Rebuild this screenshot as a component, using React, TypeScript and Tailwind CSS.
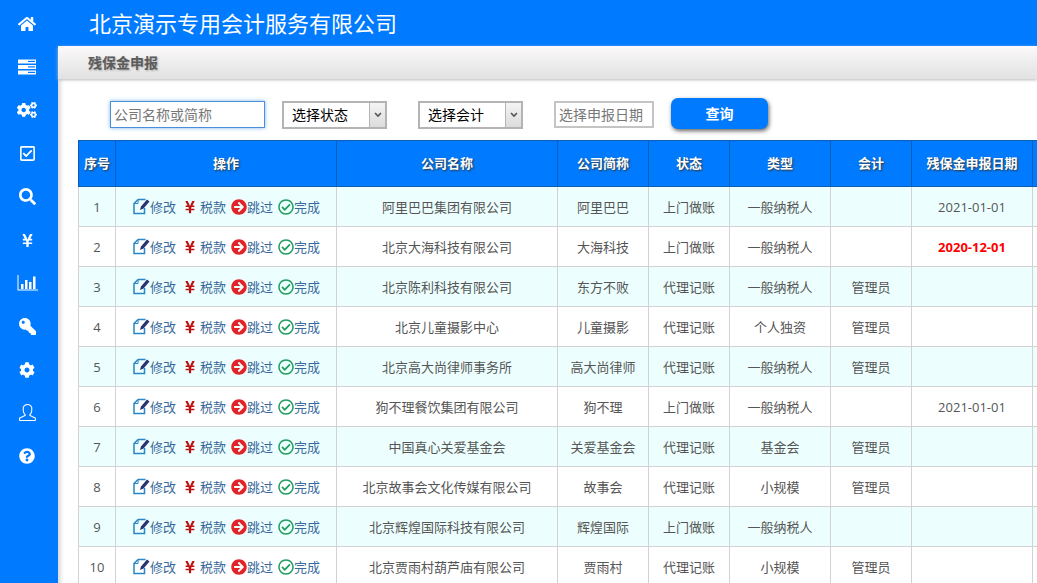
import React from "react";
import { FaHome, FaCogs, FaRegCheckSquare, FaSearch, FaYenSign, FaCog, FaQuestionCircle, FaKey, FaArrowCircleRight, FaRegCheckCircle } from "react-icons/fa";
import { SlUser } from "react-icons/sl";

const font = "font-['Open_Sans','Noto_Sans_CJK_SC',sans-serif]";

const ServerIcon = () => (
  <svg width="20" height="16" viewBox="0 0 20 16" fill="white">
    <rect x="1" y="0.5" width="18" height="4" />
    <rect x="1" y="6" width="18" height="4" />
    <rect x="1" y="11.5" width="18" height="4" />
    <rect x="11" y="1.8" width="7" height="1.2" fill="#007bff" />
    <rect x="11" y="7.3" width="7" height="1.2" fill="#007bff" />
    <rect x="11" y="12.8" width="7" height="1.2" fill="#007bff" />
  </svg>
);

const ChartIcon = () => (
  <svg width="21" height="16" viewBox="0 0 21 16" fill="white">
    <path d="M0.5 0v15.5H21v-1H1.5V0z" />
    <rect x="4" y="9" width="2.5" height="5" />
    <rect x="8" y="5" width="2.5" height="9" />
    <rect x="12" y="7" width="2.5" height="7" />
    <rect x="16" y="1.5" width="2.5" height="12.5" />
  </svg>
);

const EditIcon = () => (
  <svg width="17" height="17" viewBox="0 0 17 17" fill="none">
    <path d="M5 1.5h7.5M5 1.5L1 5.5V15.5H11.5V10" stroke="#2a87c5" strokeWidth="1.5" />
    <path d="M5 1.5V5.5H1" stroke="#2a87c5" strokeWidth="1" />
    <path d="M7 12l1-3.5 6-7 2.5 2-6 7z" fill="#27346f" />
  </svg>
);

const menu = [
  <FaHome size={18} />,
  <ServerIcon />,
  <FaCogs size={20} />,
  <FaRegCheckSquare size={17} />,
  <FaSearch size={17} />,
  <FaYenSign size={15} />,
  <ChartIcon />,
  <FaKey size={17} className="-scale-x-100" />,
  <FaCog size={16} />,
  <SlUser size={17} />,
  <FaQuestionCircle size={16} />,
];

const rows: [string, string, string, string, string, string, string, boolean?][] = [
  ["1", "阿里巴巴集团有限公司", "阿里巴巴", "上门做账", "一般纳税人", "", "2021-01-01"],
  ["2", "北京大海科技有限公司", "大海科技", "上门做账", "一般纳税人", "", "2020-12-01", true],
  ["3", "北京陈利科技有限公司", "东方不败", "代理记账", "一般纳税人", "管理员", ""],
  ["4", "北京儿童摄影中心", "儿童摄影", "代理记账", "个人独资", "管理员", ""],
  ["5", "北京高大尚律师事务所", "高大尚律师", "代理记账", "一般纳税人", "管理员", ""],
  ["6", "狗不理餐饮集团有限公司", "狗不理", "上门做账", "一般纳税人", "", "2021-01-01"],
  ["7", "中国真心关爱基金会", "关爱基金会", "代理记账", "基金会", "管理员", ""],
  ["8", "北京故事会文化传媒有限公司", "故事会", "代理记账", "小规模", "管理员", ""],
  ["9", "北京辉煌国际科技有限公司", "辉煌国际", "上门做账", "一般纳税人", "", ""],
  ["10", "北京贾雨村葫芦庙有限公司", "贾雨村", "代理记账", "小规模", "管理员", ""],
];

const heads = ["序号", "操作", "公司名称", "公司简称", "状态", "类型", "会计", "残保金申报日期", ""];
const widths = ["w-[37px]", "w-[221px]", "w-[221px]", "w-[91px]", "w-[81px]", "w-[101px]", "w-[81px]", "w-[121px]", "w-[60px]"];

const Select = ({ label, className }: { label: string; className: string }) => (
  <div className={`flex h-[28px] w-[105px] items-stretch border-2 border-[#b4b4b4] border-t-[#b4b4b4] bg-white ${className}`}>
    <span className="flex flex-1 items-center pl-[8px] text-[14px] text-black">{label}</span>
    <span className="flex w-[16px] items-center justify-center border-l border-[#b4b4b4] bg-gradient-to-b from-[#f4f4f4] to-[#dcdcdc]">
      <svg width="8" height="6" viewBox="0 0 8 6" fill="none"><path d="M1 1l3 3 3-3" stroke="#555" strokeWidth="1.6" /></svg>
    </span>
  </div>
);

export default function App() {
  return (
    <div className={`flex h-[583px] w-[1037px] overflow-hidden bg-[#007bff] ${font}`}>
      <aside className="flex w-[58px] shrink-0 flex-col pt-[2.5px] text-white">
        {menu.map((icon, i) => (
          <div key={i} className="flex h-[43.2px] shrink-0 items-center justify-center pr-[4px]">{icon}</div>
        ))}
      </aside>
      <div className="flex min-w-0 flex-1 flex-col">
        <header className="flex h-[46px] shrink-0 items-center pl-[31px] text-[22px] text-white">北京演示专用会计服务有限公司</header>
        <main className="flex min-h-0 flex-1 flex-col bg-white shadow-[inset_5px_0_5px_-3px_#d0d0d0]">
          <div className="flex h-[33px] shrink-0 items-center bg-gradient-to-b from-[#fbf9f9] to-[#e2e2e2] pl-[30px] text-[14px] font-bold text-[#5c5c5c] [text-shadow:1px_1px_2px_#aaa] shadow-[0_1px_3px_#bbb]">残保金申报</div>
          <div className="flex items-center pl-[52px] pt-[20px]">
            <input
              placeholder="公司名称或简称"
              className="h-[27px] w-[155px] border border-[#4a90d9] pl-[3px] text-[14px] shadow-[0_0_4px_#7fb4ea] outline-none placeholder:text-[#777]"
            />
            <Select label="选择状态" className="ml-[17px]" />
            <Select label="选择会计" className="ml-[31px]" />
            <input
              placeholder="选择申报日期"
              className="ml-[31px] h-[27px] w-[100px] border-2 border-[#c4c4c4] pl-[3px] text-[14px] outline-none placeholder:text-[#777]"
            />
            <button className="ml-[17px] h-[31px] w-[97px] -translate-y-[1px] rounded-[7px] bg-[#007bff] text-[14px] font-bold text-white shadow-[1px_2px_4px_#666]">查询</button>
          </div>
          <div className="ml-[20px] mt-[10px] w-[1100px]">
            <table className="table-fixed border-collapse text-center text-[13px] text-[#555]">
              <thead>
                <tr className="h-[46px] bg-[#007bff] text-white">
                  {heads.map((h, i) => (
                    <th key={i} className={`${widths[i]} border border-[#0b5fb5] p-0 text-[13px] font-bold [text-shadow:1px_1px_2px_#333]`}>{h}</th>
                  ))}
                </tr>
              </thead>
              <tbody>
                {rows.map((r, i) => (
                  <tr key={r[0]} className={`h-[40px] ${i % 2 === 0 ? "bg-[#ecfffe]" : "bg-white"}`}>
                    <td className="border border-[#d2d2d2] p-0 pt-[3px]">{r[0]}</td>
                    <td className="border border-[#d2d2d2] p-0">
                      <div className="flex items-center justify-center pl-[1px] text-[13px] text-[#3a6a9c]">
                        <span className="flex items-center"><EditIcon /><span className="mt-[3px]">修改</span></span>
                        <span className="ml-[7px] flex items-center">
                          <FaYenSign size={14} className="mr-[3px] text-[#c00f0f]" /><span className="mt-[3px]">税款</span>
                        </span>
                        <span className="ml-[5px] flex items-center">
                          <FaArrowCircleRight size={16} className="text-[#e0242a]" /><span className="mt-[3px]">跳过</span>
                        </span>
                        <span className="ml-[5px] flex items-center">
                          <FaRegCheckCircle size={16} className="text-[#1f9d5d]" /><span className="mt-[3px]">完成</span>
                        </span>
                      </div>
                    </td>
                    <td className="border border-[#d2d2d2] p-0 pt-[3px]">{r[1]}</td>
                    <td className="border border-[#d2d2d2] p-0 pt-[3px]">{r[2]}</td>
                    <td className="border border-[#d2d2d2] p-0 pt-[3px]">{r[3]}</td>
                    <td className="border border-[#d2d2d2] p-0 pt-[3px]">{r[4]}</td>
                    <td className="border border-[#d2d2d2] p-0 pt-[3px]">{r[5]}</td>
                    <td className={`border border-[#d2d2d2] p-0 pt-[3px] ${r[7] ? "font-bold text-[#ff0000]" : ""}`}>{r[6]}</td>
                    <td className="border border-[#d2d2d2] p-0"></td>
                  </tr>
                ))}
              </tbody>
            </table>
          </div>
        </main>
      </div>
    </div>
  );
}
